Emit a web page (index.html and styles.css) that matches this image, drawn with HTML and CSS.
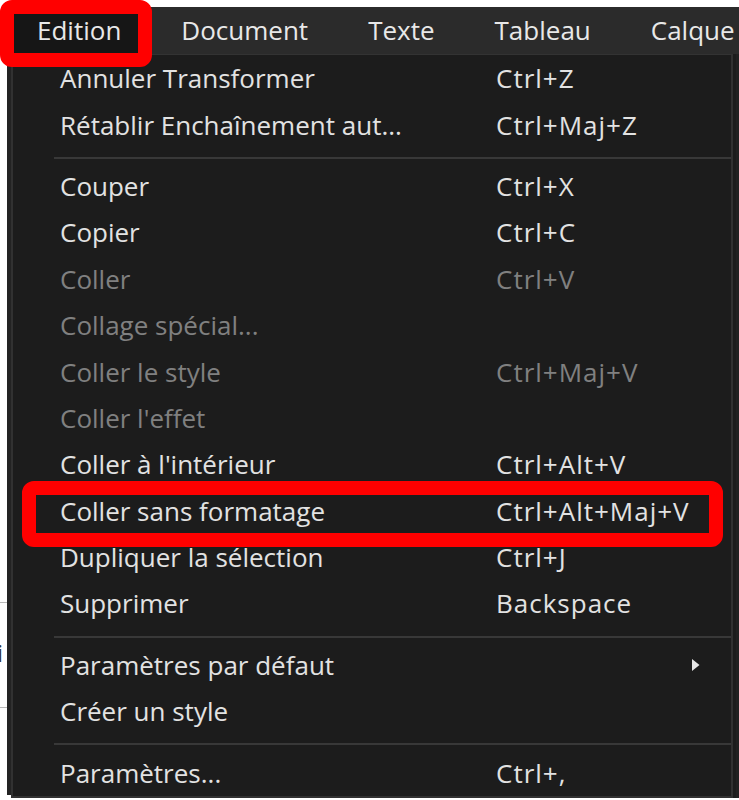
FILE: index.html
```html
<!DOCTYPE html>
<html lang="fr">
<head>
<meta charset="utf-8">
<title>Edition</title>
<link rel="stylesheet" href="styles.css">
</head>
<body>
<div class="screen">
  <div class="side">
    <div class="side-line first"></div>
    <div class="side-glyph">i</div>
    <div class="side-line"></div>
  </div>
  <div class="window">
    <nav class="menubar">
      <span class="mb-item active">Edition</span>
      <span class="mb-item">Document</span>
      <span class="mb-item">Texte</span>
      <span class="mb-item">Tableau</span>
      <span class="mb-item">Calque</span>
    </nav>
    <div class="below">
      <div class="dropdown">
        <div class="row"><span class="label">Annuler Transformer</span><span class="key">Ctrl+Z</span></div>
        <div class="row"><span class="label">Rétablir Enchaînement aut...</span><span class="key">Ctrl+Maj+Z</span></div>
        <div class="sep"></div>
        <div class="row"><span class="label">Couper</span><span class="key">Ctrl+X</span></div>
        <div class="row"><span class="label">Copier</span><span class="key">Ctrl+C</span></div>
        <div class="row disabled"><span class="label">Coller</span><span class="key">Ctrl+V</span></div>
        <div class="row disabled"><span class="label">Collage spécial...</span><span class="key"></span></div>
        <div class="row disabled"><span class="label">Coller le style</span><span class="key">Ctrl+Maj+V</span></div>
        <div class="row disabled"><span class="label">Coller l'effet</span><span class="key"></span></div>
        <div class="row"><span class="label">Coller à l'intérieur</span><span class="key">Ctrl+Alt+V</span></div>
        <div class="row"><span class="label">Coller sans formatage</span><span class="key">Ctrl+Alt+Maj+V</span></div>
        <div class="row"><span class="label">Dupliquer la sélection</span><span class="key">Ctrl+J</span></div>
        <div class="row"><span class="label">Supprimer</span><span class="key">Backspace</span></div>
        <div class="sep"></div>
        <div class="row"><span class="label">Paramètres par défaut</span><span class="key"></span>
          <svg class="arrow" width="9" height="14" viewBox="0 0 9 14"><path d="M1 1 L8.5 7 L1 13 Z" fill="#e6e6e6"/></svg>
        </div>
        <div class="row"><span class="label">Créer un style</span><span class="key"></span></div>
        <div class="sep"></div>
        <div class="row"><span class="label">Paramètres...</span><span class="key">Ctrl+,</span></div>
      </div>
      <div class="rest"></div>
    </div>
  </div>
  <div class="mark mark-edition"></div>
  <div class="mark mark-paste"></div>
</div>
</body>
</html>
```
FILE: styles.css
```css
html, body {
  margin: 0;
  padding: 0;
}
body {
  background: #ffffff;
  font-family: "Open Sans", "Noto Sans", "DejaVu Sans", sans-serif;
}
.screen {
  position: relative;
  width: 739px;
  height: 800px;
  overflow: hidden;
  display: flex;
  align-items: flex-start;
  padding-top: 7px;
  box-sizing: border-box;
}
.side {
  width: 7px;
  flex: none;
  display: flex;
  flex-direction: column;
  overflow: hidden;
}
.side-line {
  height: 1px;
  background: #b9b9b9;
}
.side-line.first {
  margin-top: 595px;
}
.side-glyph {
  margin-top: 38px;
  margin-bottom: 42px;
  margin-left: -3px;
  font-size: 24px;
  line-height: 24px;
  color: #333;
}
.window {
  flex: 1;
  height: 788px;
  background: #232323;
  display: flex;
  flex-direction: column;
}
.menubar {
  height: 47px;
  flex: none;
  background: #2b2b2b;
  display: flex;
  align-items: stretch;
  font-size: 26px;
  color: #e8e8e8;
}
.mb-item {
  padding: 0 30px;
  line-height: 47px;
  white-space: nowrap;
}
.mb-item.active {
  background: #161616;
}
.below {
  flex: 1;
  display: flex;
}
.dropdown {
  margin-left: 4px;
  width: 722px;
  flex: none;
  box-sizing: border-box;
  background: #1c1c1c;
  border: 2px solid #313131;
  border-top: 1px solid #333333;
}
.rest {
  flex: 1;
  background: #212121;
  border-left: 3px solid #1c1c1c;
  border-right: 1px solid #333;
}
.row {
  display: grid;
  grid-template-columns: 436px 1fr auto;
  align-items: center;
  height: 46.4px;
  padding-left: 47px;
  padding-right: 31px;
  font-size: 26px;
  color: #e2e2e2;
  white-space: nowrap;
}
.row.disabled {
  color: #808080;
}
.key {
  letter-spacing: 1px;
}
.arrow {
  display: block;
}
.sep {
  height: 2px;
  background: #383838;
  margin: 9px 0 4px 41px;
}
.mark {
  position: absolute;
  box-sizing: border-box;
  border: 14px solid #ff0000;
  border-radius: 12px;
}
.mark-edition {
  left: 0;
  top: 0;
  width: 152px;
  height: 67px;
}
.mark-paste {
  left: 22px;
  top: 481px;
  width: 701px;
  height: 66px;
}
```
